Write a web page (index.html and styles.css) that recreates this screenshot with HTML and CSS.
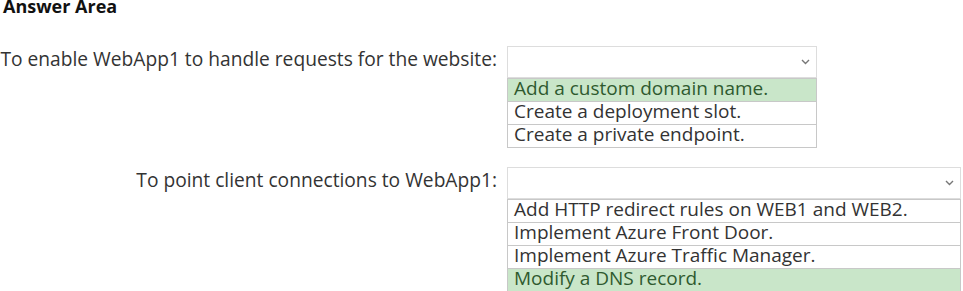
FILE: index.html
```html
<!DOCTYPE html>
<html lang="en">
<head>
  <meta charset="UTF-8">
  <title>Answer Area</title>
  <link rel="stylesheet" href="styles.css">
</head>
<body>
  <h3>Answer Area</h3>

  <!-- Question 1 -->
  <div class="question q1">
    <div class="label">To enable WebApp1 to handle requests for the website:</div>
    <div class="answer">
      <div class="dropdown">
        <svg class="chevron" width="9" height="6" viewBox="0 0 9 6"><path d="M1 1l3.5 3.5L8 1" fill="none" stroke="#777" stroke-width="1.4"/></svg>
      </div>
      <ul class="options">
        <li class="selected">Add a custom domain name.</li>
        <li>Create a deployment slot.</li>
        <li>Create a private endpoint.</li>
      </ul>
    </div>
  </div>

  <!-- Question 2 -->
  <div class="question q2">
    <div class="label">To point client connections to WebApp1:</div>
    <div class="answer">
      <div class="dropdown">
        <svg class="chevron" width="9" height="6" viewBox="0 0 9 6"><path d="M1 1l3.5 3.5L8 1" fill="none" stroke="#777" stroke-width="1.4"/></svg>
      </div>
      <ul class="options">
        <li>Add HTTP redirect rules on WEB1 and WEB2.</li>
        <li>Implement Azure Front Door.</li>
        <li>Implement Azure Traffic Manager.</li>
        <li class="selected">Modify a DNS record.</li>
      </ul>
    </div>
  </div>
</body>
</html>
```

FILE: styles.css
```css
body {
  margin: 0;
  font-family: "Open Sans", "Noto Sans", sans-serif;
  background-color: #fff;
  color: #333;
}

h3 {
  margin: 0;
  padding-left: 3px;
  font-size: 18px;
  line-height: 13px;
  font-weight: bold;
  color: #111;
}

.question {
  display: grid;
  grid-template-columns: 497px auto;
  column-gap: 10px;
  align-items: start;
}

.q1 {
  margin-top: 33px;
}

.q2 {
  margin-top: 19px;
}

.label {
  height: 24px;
  padding-bottom: 8px;
  display: flex;
  align-items: center;
  justify-content: flex-end;
  font-size: 19.2px;
  color: #333;
  white-space: nowrap;
}

.q1 .answer {
  width: 310px;
}

.q2 .answer {
  width: 454px;
}

.dropdown {
  height: 30px;
  border: 1px solid #ddd;
  display: flex;
  align-items: center;
  justify-content: flex-end;
  padding-right: 6px;
}

.options {
  list-style: none;
  margin: 0;
  padding: 0;
  border: 1px solid #c8c8c8;
  border-top: none;
}

.options li {
  height: 22px;
  line-height: 18px;
  padding-left: 6px;
  font-size: 19px;
  color: #333;
  border-top: 1px solid #c8c8c8;
  white-space: nowrap;
}

.options li.selected {
  background-color: #c9e6c9;
  color: #2f5a2f;
}
```
